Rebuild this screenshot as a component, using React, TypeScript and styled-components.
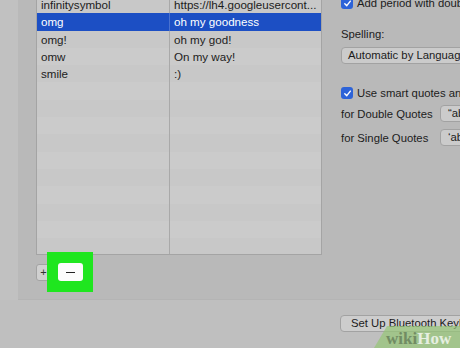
import React from "react";
import styled, { createGlobalStyle } from "styled-components";

const Global = createGlobalStyle`
  html, body { margin: 0; padding: 0; }
  body {
    width: 460px;
    height: 348px;
    overflow: hidden;
    background: #c1c1c1;
    font-family: "Liberation Sans", Arial, sans-serif;
    color: #1c1c1c;
  }
`;

const Screen = styled.div`
  position: relative;
  width: 460px;
  height: 348px;
  display: flex;
  flex-direction: column;
  overflow: hidden;
`;

const Panel = styled.div`
  height: 300px;
  margin-left: 18px;
  background: #b9b9b9;
  display: flex;
  border-bottom: 1px solid #b4b4b4;
  box-sizing: border-box;
`;

const LeftColumn = styled.div`
  width: 304px;
  padding-left: 18px;
  box-sizing: border-box;
  display: flex;
  flex-direction: column;
`;

const Table = styled.div`
  width: 286px;
  height: 255px;
  box-sizing: border-box;
  border-left: 1px solid #a4a4a4;
  border-right: 1px solid #a4a4a4;
  border-bottom: 1px solid #a4a4a4;
  overflow: hidden;
  background: #c9c9c9;
  display: flex;
  flex-direction: column;
`;

const Rows = styled.div`
  margin-top: -4px;
  display: flex;
  flex-direction: column;
`;

const Row = styled.div<{ $selected?: boolean; $alt?: boolean }>`
  display: grid;
  grid-template-columns: 133px 1fr;
  height: 17.3px;
  flex: none;
  background: ${(p) => (p.$selected ? "#1c4fc4" : p.$alt ? "#cbcbcb" : "#c8c8c8")};
  color: ${(p) => (p.$selected ? "#ffffff" : "#1c1c1c")};
  font-size: 11.6px;
  line-height: 17px;
`;

const Cell = styled.div<{ $divider?: boolean; $selected?: boolean }>`
  padding-left: 4px;
  white-space: nowrap;
  overflow: hidden;
  border-right: ${(p) => (p.$divider ? `1px solid ${p.$selected ? "#4a72cf" : "#a9a9a9"}` : "none")};
`;

const ButtonRow = styled.div`
  display: flex;
  align-items: center;
  margin-top: -3px;
`;

const SmallButton = styled.div`
  width: 15px;
  height: 17px;
  box-sizing: border-box;
  background: #d0d0d0;
  border: 1px solid #a3a3a3;
  border-radius: 3px;
  display: flex;
  align-items: center;
  justify-content: center;
  font-size: 11px;
  color: #333;
`;

const Highlight = styled.div`
  position: relative;
  z-index: 2;
  width: 46px;
  height: 40px;
  margin-left: -4px;
  background: #1fe61f;
  display: flex;
  align-items: center;
  justify-content: center;
`;

const MinusButton = styled.div`
  width: 25px;
  height: 18px;
  background: #fbfbfb;
  border-radius: 3px;
  display: flex;
  align-items: center;
  justify-content: center;
`;

const MinusBar = styled.div`
  width: 9px;
  height: 1px;
  background: #222;
`;

const RightColumn = styled.div`
  flex: 1;
  padding-left: 19px;
  display: flex;
  flex-direction: column;
  font-size: 11.3px;
  white-space: nowrap;
  overflow: hidden;
`;

const CheckRow = styled.label<{ $top: number }>`
  display: flex;
  align-items: center;
  gap: 4px;
  height: 14px;
  margin-top: ${(p) => p.$top}px;
`;

const Checkbox = styled.span`
  width: 12px;
  height: 12px;
  flex: none;
  border-radius: 3px;
  background: #2d63d8;
  display: flex;
  align-items: center;
  justify-content: center;
`;

const Label = styled.div<{ $top: number }>`
  height: 14px;
  line-height: 14px;
  margin-top: ${(p) => p.$top}px;
`;

const Popup = styled.div`
  height: 17px;
  margin-top: 6px;
  width: 160px;
  box-sizing: border-box;
  border: 1px solid #a2a2a2;
  border-radius: 4px;
  background: #cbcbcb;
  padding-left: 6px;
  line-height: 15px;
`;

const QuoteRow = styled.div<{ $top: number }>`
  display: flex;
  align-items: center;
  height: 17px;
  margin-top: ${(p) => p.$top}px;
`;

const QuoteText = styled.span`
  width: 99px;
  flex: none;
`;

const QuoteButton = styled.div`
  height: 17px;
  width: 60px;
  box-sizing: border-box;
  border: 1px solid #a2a2a2;
  border-radius: 4px;
  background: #cbcbcb;
  padding-left: 7px;
  line-height: 15px;
`;

const Footer = styled.div`
  flex: 1;
  padding: 15px 0 0 340px;
  background: #bfbfbf;
  overflow: hidden;
`;

const FooterButton = styled.div`
  height: 17px;
  width: 160px;
  box-sizing: border-box;
  border: 1px solid #a2a2a2;
  border-radius: 4px;
  background: #cdcdcd;
  padding-left: 10px;
  font-size: 11.3px;
  line-height: 15px;
  white-space: nowrap;
`;

const Watermark = styled.div`
  position: absolute;
  right: 0;
  bottom: 0;
  width: 86px;
  height: 22px;
  background: rgba(150, 198, 118, 0.7);
  clip-path: polygon(13px 0, 100% 0, 100% 100%, 0 100%);
  display: flex;
  align-items: center;
  padding: 3px 0 0 12px;
  box-sizing: border-box;
  font-family: "Liberation Serif", "Times New Roman", serif;
  font-weight: bold;
  font-size: 17px;
  line-height: 17px;
`;

const Wiki = styled.span`
  color: #718c63;
`;

const How = styled.span`
  color: #e6efe1;
`;

const Check = () => (
  <svg width="9" height="9" viewBox="0 0 10 10">
    <path d="M2 5.2 L4.2 7.4 L8.2 2.4" stroke="#fff" strokeWidth="1.6" fill="none" strokeLinecap="round" strokeLinejoin="round" />
  </svg>
);

const data: [string, string][] = [
  ["infinitysymbol", "https://lh4.googleusercont..."],
  ["omg", "oh my goodness"],
  ["omg!", "oh my god!"],
  ["omw", "On my way!"],
  ["smile", ":)"],
];

export default function App() {
  const rows = Array.from({ length: 16 }, (_, i) => data[i] ?? ["", ""]);
  return (
    <>
      <Global />
      <Screen>
        <Panel>
          <LeftColumn>
            <Table>
              <Rows>
                {rows.map(([a, b], i) => (
                  <Row key={i} $selected={i === 1} $alt={i % 2 === 1}>
                    <Cell $divider $selected={i === 1}>{a}</Cell>
                    <Cell>{b}</Cell>
                  </Row>
                ))}
              </Rows>
            </Table>
            <ButtonRow>
              <SmallButton>+</SmallButton>
              <Highlight>
                <MinusButton>
                  <MinusBar />
                </MinusButton>
              </Highlight>
            </ButtonRow>
          </LeftColumn>
          <RightColumn>
            <CheckRow $top={-4}>
              <Checkbox><Check /></Checkbox>
              Add period with double-space
            </CheckRow>
            <Label $top={17}>Spelling:</Label>
            <Popup>Automatic by Language</Popup>
            <CheckRow $top={22}>
              <Checkbox><Check /></Checkbox>
              Use smart quotes and dashes
            </CheckRow>
            <QuoteRow $top={5}>
              <QuoteText>for Double Quotes</QuoteText>
              <QuoteButton>“abc”</QuoteButton>
            </QuoteRow>
            <QuoteRow $top={7}>
              <QuoteText>for Single Quotes</QuoteText>
              <QuoteButton>‘abc’</QuoteButton>
            </QuoteRow>
          </RightColumn>
        </Panel>
        <Footer>
          <FooterButton>Set Up Bluetooth Keyboard…</FooterButton>
        </Footer>
        <Watermark>
          <Wiki>wiki</Wiki>
          <How>How</How>
        </Watermark>
      </Screen>
    </>
  );
}
